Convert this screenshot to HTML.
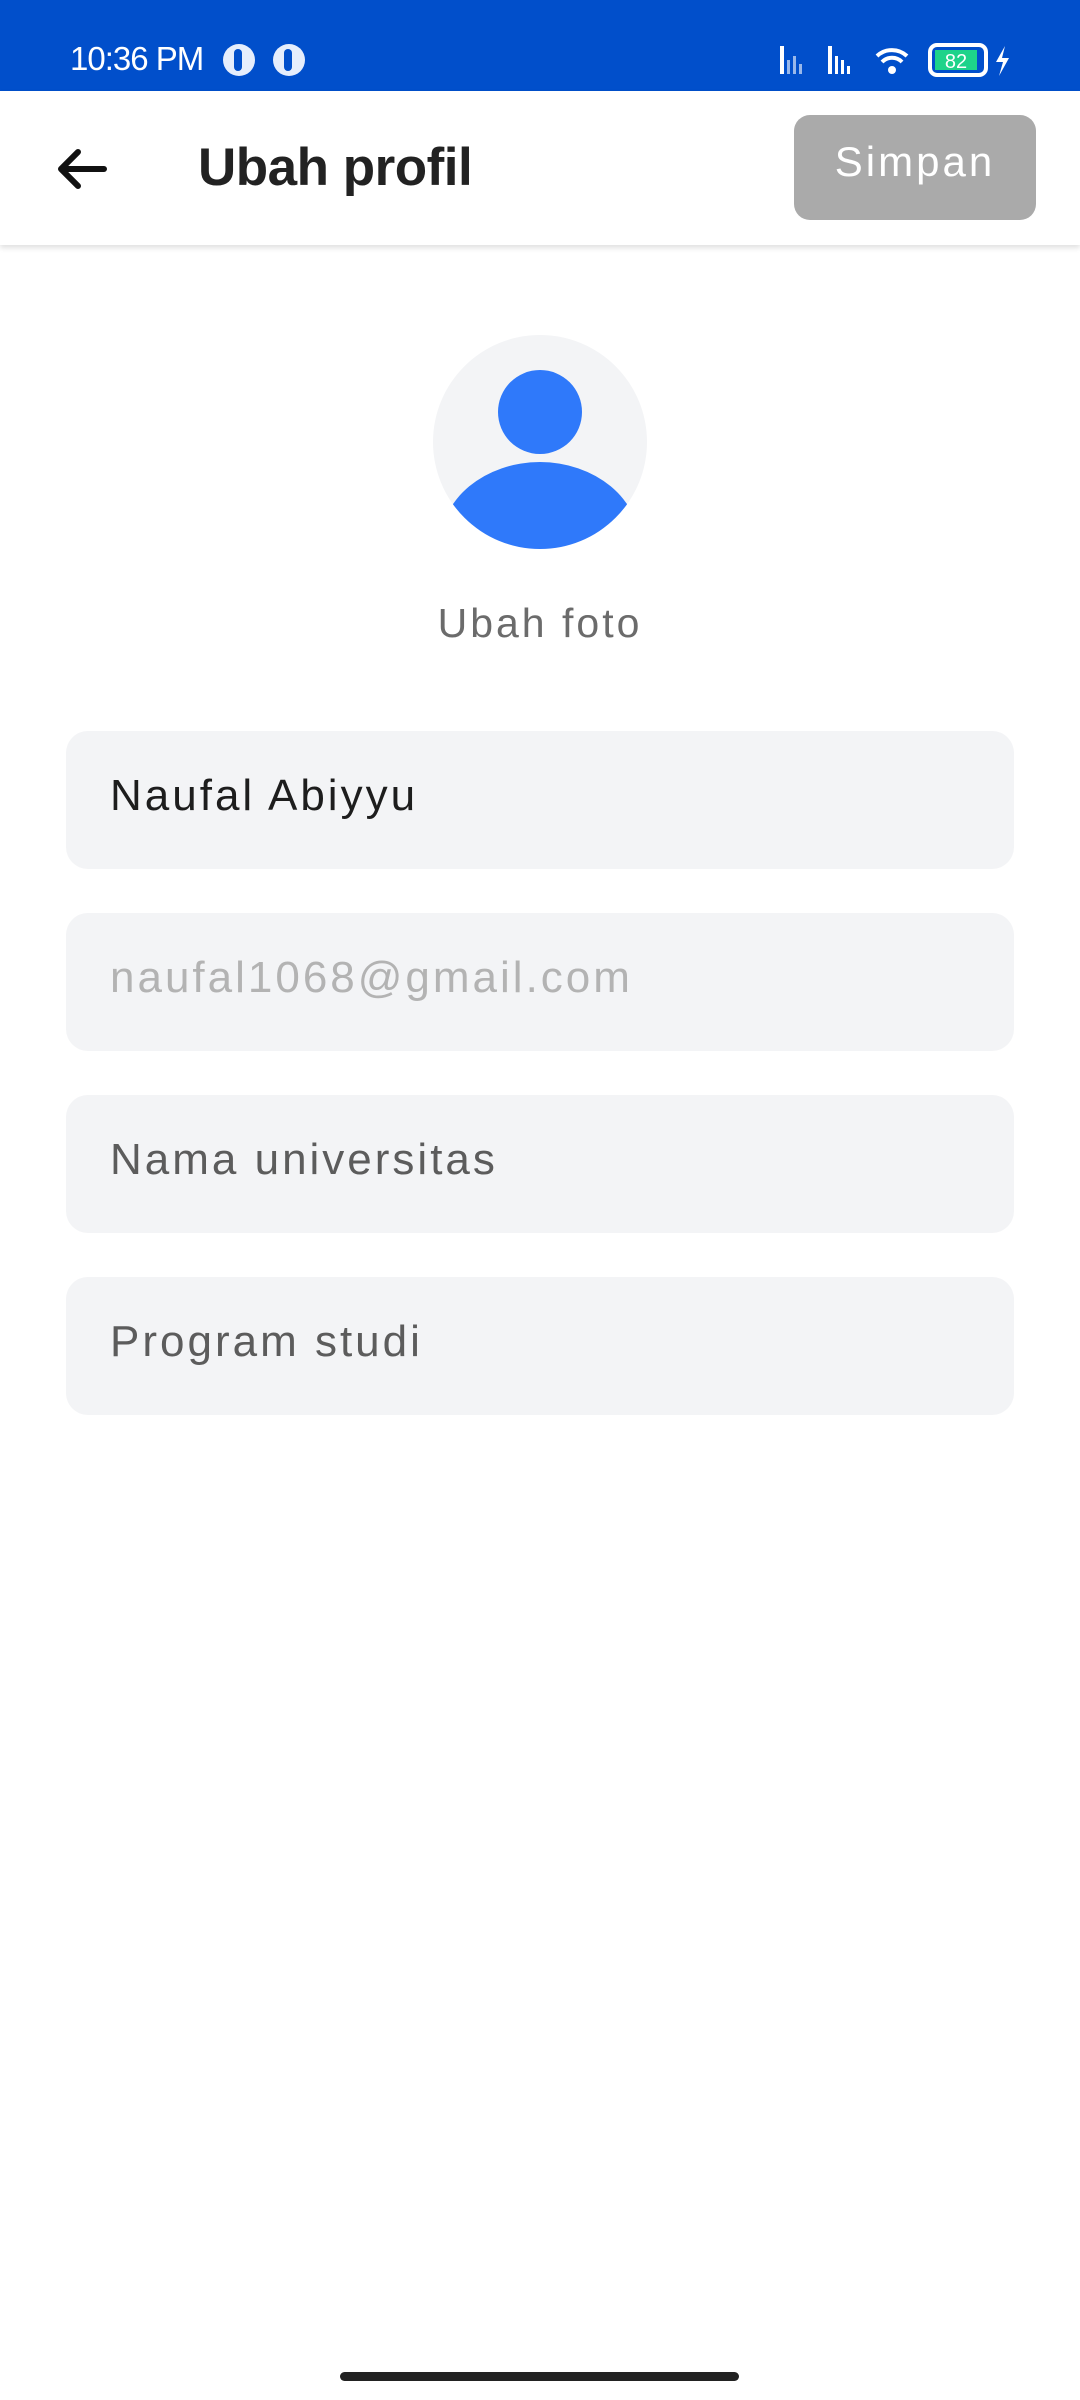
<!DOCTYPE html>
<html><head><meta charset="utf-8"><style>
*{margin:0;padding:0;box-sizing:border-box}
body{width:1080px;height:2400px;background:#fff;font-family:"Liberation Sans",sans-serif;position:relative;overflow:hidden}
.sb{position:absolute;left:0;top:0;width:1080px;height:91px;background:#014fcb;color:#fff}
.hdr{position:absolute;left:0;top:91px;width:1080px;height:154px;background:#fff;box-shadow:0 3px 5px rgba(0,0,0,0.12)}
.field{position:absolute;left:66px;width:948px;height:138px;background:#f3f4f6;border-radius:22px;font-size:44px;letter-spacing:3px;padding-left:44px;line-height:130px}
</style></head><body>
<div class="sb">
 <div style="position:absolute;left:70px;top:40px;font-size:33px;letter-spacing:-1px">10:36 PM</div>
 <div style="position:absolute;left:223px;top:44px;width:32px;height:32px;border-radius:50%;background:#e6eefc"><div style="position:absolute;left:11px;top:5px;width:8px;height:22px;border-radius:4px;background:#014fcb"></div></div>
 <div style="position:absolute;left:273px;top:44px;width:32px;height:32px;border-radius:50%;background:#e6eefc"><div style="position:absolute;left:11px;top:5px;width:8px;height:22px;border-radius:4px;background:#014fcb"></div></div>
 <svg style="position:absolute;left:775px;top:42px" width="240" height="36" viewBox="0 0 240 36">
  <g fill="#fff"><rect x="5" y="4" width="4" height="28"/><rect x="12" y="18" width="3" height="14" opacity=".6"/><rect x="18" y="14" width="3" height="18" opacity=".6"/><rect x="24" y="22" width="3" height="10" opacity=".6"/>
  <rect x="53" y="4" width="4" height="28"/><rect x="60" y="14" width="3" height="18"/><rect x="66" y="18" width="3" height="14"/><rect x="72" y="24" width="3" height="8"/></g>
  <path d="M102 14a22 22 0 0 1 30 0M107 20a14 14 0 0 1 20 0" stroke="#fff" stroke-width="4" fill="none"/><circle cx="117" cy="28" r="4" fill="#fff"/>
  <rect x="155" y="3" width="56" height="30" rx="7" fill="none" stroke="#fff" stroke-width="4"/><rect x="160" y="8" width="42" height="20" fill="#1ed38a"/>
  <text x="181" y="26" font-size="20" fill="#fff" text-anchor="middle" font-family="Liberation Sans">82</text>
  <path d="M230 4l-9 16h7l-4 14 10-18h-7z" fill="#fff"/>
 </svg>
</div>
<div class="hdr">
 <svg style="position:absolute;left:54px;top:56px" width="54" height="44" viewBox="0 0 54 44"><path d="M50 22H8M24 5L7 22l17 17" stroke="#111" stroke-width="6" fill="none" stroke-linecap="round" stroke-linejoin="round"/></svg>
 <div style="position:absolute;left:198px;top:46px;font-size:53px;font-weight:bold;color:#222;letter-spacing:-0.5px">Ubah profil</div>
 <div style="position:absolute;left:794px;top:24px;width:242px;height:105px;background:#aaa;border-radius:16px;color:#fff;font-size:42px;letter-spacing:3px;text-align:center;line-height:94px">Simpan</div>
</div>
<svg style="position:absolute;left:433px;top:335px" width="214" height="214" viewBox="0 0 214 214">
 <defs><clipPath id="c"><circle cx="107" cy="107" r="107"/></clipPath></defs>
 <circle cx="107" cy="107" r="107" fill="#f3f4f6"/>
 <circle cx="107" cy="77" r="42" fill="#2f79fa"/>
 <ellipse cx="107" cy="210" rx="100" ry="83" fill="#2f79fa" clip-path="url(#c)"/>
</svg>
<div style="position:absolute;left:0;width:1080px;top:600px;text-align:center;font-size:41px;letter-spacing:3px;color:#6b6b6b">Ubah foto</div>
<div class="field" style="top:731px;color:#1d1d1d">Naufal Abiyyu</div>
<div class="field" style="top:913px;color:#b3b3b3">naufal1068@gmail.com</div>
<div class="field" style="top:1095px;color:#5c5c5c">Nama universitas</div>
<div class="field" style="top:1277px;color:#5c5c5c">Program studi</div>
<div style="position:absolute;left:340px;top:2372px;width:399px;height:9px;border-radius:5px;background:#222"></div>
</body></html>
